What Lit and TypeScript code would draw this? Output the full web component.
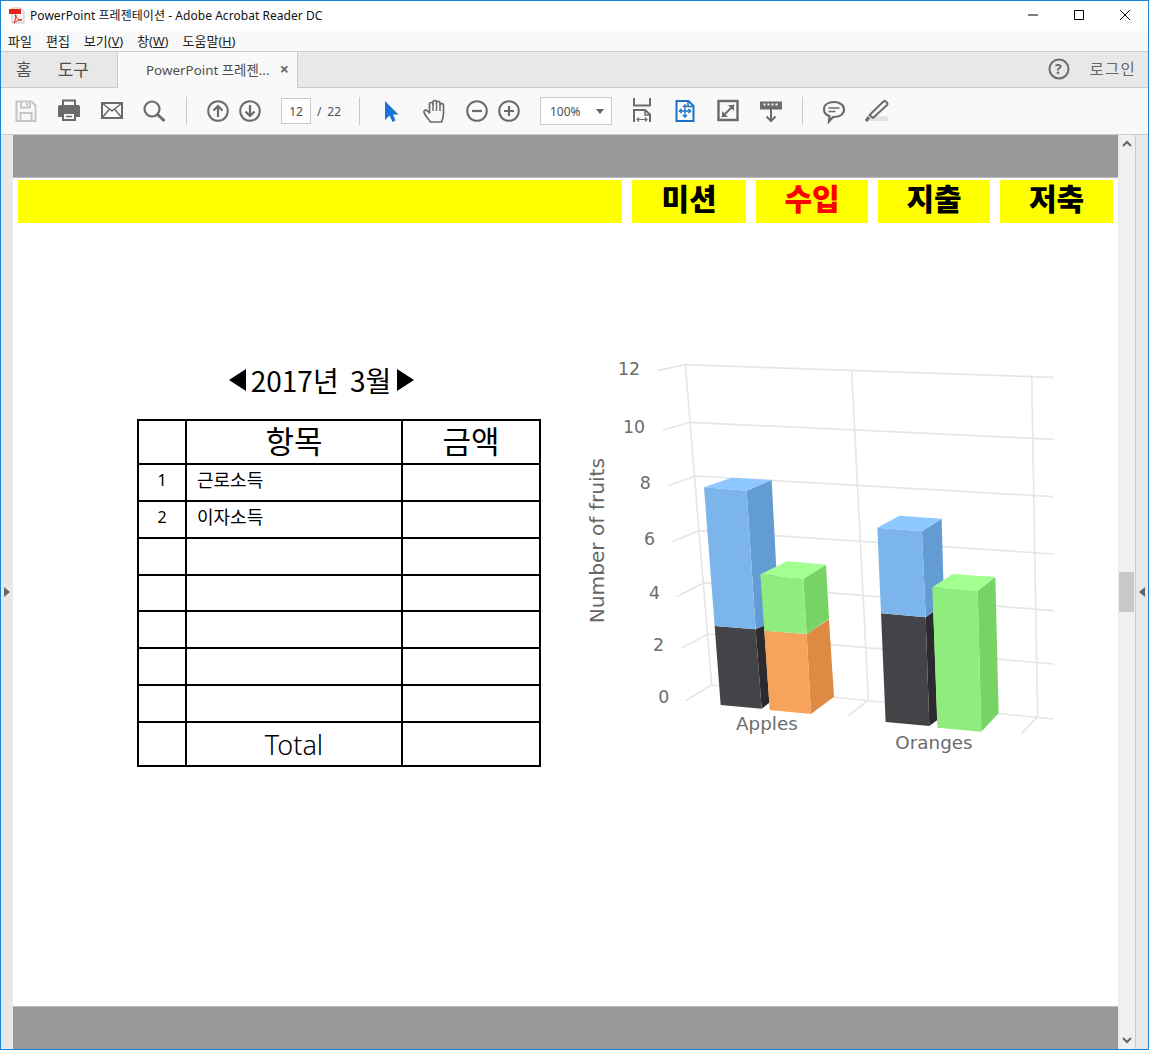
import {css, html, LitElement, svg} from "lit";
import {customElement} from "lit/decorators.js";

const INK = "#6b6b6b";

// one 26x26 toolbar glyph
const icon = (body: unknown) =>
  html`<svg class="ico" viewBox="0 0 26 26" width="26" height="26" fill="none" stroke=${INK} stroke-width="2">${body}</svg>`;

const icons = {
  save: svg`<g stroke="#c6c6c6"><path d="M3.5 3.5h15l4 4v15.500h-19z"/><path d="M8 3.500v6h9v-6M14 5v3M7.500 23v-8h11v8"/></g>`,
  print: svg`<path d="M7 7V2.500h12V7" stroke-width="2"/><path d="M4 7h18a2 2 0 0 1 2 2v10h-4v-4H6v4H2V9a2 2 0 0 1 2-2z" fill=${INK} stroke="none"/><path d="M7 15h12v7H7z" fill="#f9f9f9" stroke-width="2"/><path d="M10 18.500h6" stroke-width="1.500"/>`,
  mail: svg`<path d="M3 5h20v15H3z"/><path d="M3 5l10 8 10-8M3 20l7.500-9M23 20l-7.500-9" stroke-width="1.500"/>`,
  search: svg`<circle cx="10" cy="11" r="7.500" stroke-width="2.200"/><path d="M15.500 16.500l7 6.500" stroke-width="3"/>`,
  up: svg`<circle cx="13" cy="13" r="9.800"/><path d="M13 19V8M8.500 12.500L13 8l4.500 4.500" stroke-width="2.200"/>`,
  down: svg`<circle cx="13" cy="13" r="9.800"/><path d="M13 7v11M8.500 13.500L13 18l4.500-4.500" stroke-width="2.200"/>`,
  cursor: svg`<path d="M7 3v19l4.500-4.500 3 6.500 3-1.500-2.500-6h5.500z" fill="#1a73d2" stroke="none"/>`,
  hand: svg`<g transform="translate(1.500 0)"><path d="M8 24C6 21 2 17 1.500 14c-.3-2 2-2.500 3.500-1l2 2V6c0-2 3.500-2 3.500 0V4c0-2 3.500-2 3.500 0v.5c0-1.700 3.500-1.700 3.500 0V7c0-1.800 3.500-1.800 3.500 0v8c0 4-1 7-2 9z" stroke-width="1.700" stroke-linejoin="round"/><path d="M10.500 6v7M14 4.500V13M17.500 7v6" stroke-width="1.500"/></g>`,
  minus: svg`<circle cx="13" cy="13" r="9.800"/><path d="M8 13h10" stroke-width="2.200"/>`,
  plus: svg`<circle cx="13" cy="13" r="9.800"/><path d="M8 13h10M13 8v10" stroke-width="2.200"/>`,
  fitWidth: svg`<path d="M5 0v7.500h16V0" stroke-width="2"/><path d="M5 24v-12h11l5 4.500V24" stroke-width="2"/><path d="M16 12v5h5" stroke-width="1.500"/><path d="M8 21.500h10M10 19.500l-2 2 2 2M16 19.500l2 2-2 2" stroke-width="1.200"/>`,
  fitPage: svg`<g stroke="#1a73c8"><path d="M4.500 3h12l5 5v15h-17z" stroke-width="2"/><path d="M16 3v5.500h5.500" stroke-width="1.500"/><path d="M13 7v12M7.500 13h11" stroke-width="1.300"/><path d="M11 9l2-2 2 2M11 17l2 2 2-2M9.500 11l-2 2 2 2M16.500 11l2 2-2 2" stroke-width="1.500"/></g>`,
  full: svg`<path d="M3.500 3h19v19h-19z" stroke-width="2.400"/><path d="M7 19l12-12" stroke-width="2"/><path d="M13 7h6v6z" fill=${INK} stroke="none"/><path d="M7 13v6h6z" fill=${INK} stroke="none"/>`,
  read: svg`<path d="M2 3.500h22v8H2z" fill=${INK} stroke="none"/><path d="M5.500 6.500h15" stroke="#f9f9f9" stroke-width="2" stroke-dasharray="2 2"/><path d="M13 11v12M8.500 18.500L13 23l4.500-4.500" stroke-width="2"/>`,
  comment: svg`<path d="M13 4c6 0 10 3 10 7.500S19 19 13 19h-1l-4 4.500.5-5.500C5 17 3 14.500 3 11.500 3 7 7 4 13 4z" stroke-width="2.200"/><path d="M7.500 10h11M7.500 13.500h7" stroke-width="1.300"/>`,
  marker: svg`<path d="M2 23h22v-5H9z" fill="#e3e3e3" stroke="none"/><path d="M2 23l3-4" stroke-width="3"/><path d="M5.500 17l3.500 3L23 7c1.500-1.500-1.500-5-3.500-3.500z" stroke-width="2" stroke-linejoin="round"/>`,
};

interface Face {
  d: string;
  fill: string;
}

// chart is drawn in a 3x canvas so the projected corners stay whole numbers
const GRID = [
  "M232 62L316 44L1420 82",
  "M248 240L330 217L1420 268",
  "M262 408L345 378L1420 440",
  "M276 575L358 542L1420 612",
  "M290 740L372 698L1420 782",
  "M304 895L384 852L1420 942",
  "M316 1052L395 1005L1420 1107",
  "M316 44L395 1005",
  "M815 62L865 1050",
  "M1355 82L1373 1100",
  "M802 1100L865 1050",
  "M1322 1153L1373 1100",
];

const BLUE = {front: "#7cb5ec", top: "#8fc8ff", side: "#639cd3"};
const DARK = {front: "#434348", side: "#2a2a2f"};
const GREEN = {front: "#90ed7d", top: "#a3ff90", side: "#77d464"};
const ORANGE = {front: "#f7a35c", side: "#de8a43"};

const FACES: Face[] = [
  {d: "M527 838L552 825L568 1058L545 1076Z", fill: DARK.side},
  {d: "M404 828L527 838L545 1076L422 1065Z", fill: DARK.front},
  {d: "M500 422L575 390L597 810L527 838Z", fill: BLUE.side},
  {d: "M372 412L455 383L575 390L500 422Z", fill: BLUE.top},
  {d: "M372 412L500 422L527 838L404 828Z", fill: BLUE.front},
  {d: "M680 852L747 808L762 1040L693 1092Z", fill: ORANGE.side},
  {d: "M553 842L680 852L693 1092L569 1080Z", fill: ORANGE.front},
  {d: "M670 686L738 644L747 806L680 852Z", fill: GREEN.side},
  {d: "M541 673L622 634L738 644L670 686Z", fill: GREEN.top},
  {d: "M541 673L670 686L680 852L553 842Z", fill: GREEN.front},
  {d: "M1037 802L1060 785L1072 1110L1048 1128Z", fill: DARK.side},
  {d: "M903 790L1037 802L1048 1128L917 1116Z", fill: DARK.front},
  {d: "M1026 544L1085 506L1092 760L1037 802Z", fill: BLUE.side},
  {d: "M892 533L958 497L1085 506L1026 544Z", fill: BLUE.top},
  {d: "M892 533L1026 544L1037 802L903 790Z", fill: BLUE.front},
  {d: "M1193 722L1246 681L1256 1090L1204 1145Z", fill: GREEN.side},
  {d: "M1057 712L1118 672L1246 681L1193 722Z", fill: GREEN.top},
  {d: "M1057 712L1193 722L1204 1145L1072 1133Z", fill: GREEN.front},
];

const Y_LABELS = [
  {t: "12", x: 180, y: 76},
  {t: "10", x: 195, y: 250},
  {t: "8", x: 212, y: 416},
  {t: "6", x: 225, y: 585},
  {t: "4", x: 240, y: 748},
  {t: "2", x: 252, y: 902},
  {t: "0", x: 268, y: 1058},
];

const ROWS = ["1", "2", "", "", "", "", ""];
const ROW_LABELS = ["근로소득", "이자소득"];

@customElement("app-root")
export class AppRoot extends LitElement {
  static styles = css`
    :host {
      display: block;
      width: 1152px;
      height: 1050px;
      background: #fff;
      font-family: "Noto Sans", "Noto Sans CJK KR", sans-serif;
      overflow: hidden;
    }
    .window {
      width: 1147px;
      height: 1048px;
      border: 1px solid #1883d7;
      display: flex;
      flex-direction: column;
      background: #e8e8e8;
    }
    .titlebar {
      height: 30px;
      flex: none;
      background: #fff;
      display: flex;
      align-items: center;
      padding: 0 0 2px 8px;
      box-sizing: border-box;
      font-size: 12px;
      color: #111;
    }
    .titlebar .name {
      margin-left: 5px;
      flex: 1;
      letter-spacing: 0.05px;
    }
    .winbtn {
      width: 46px;
      display: flex;
      justify-content: center;
    }
    .menubar {
      height: 21px;
      flex: none;
      box-sizing: border-box;
      background: #f9f9f9;
      display: flex;
      align-items: center;
      font-size: 13px;
      color: #222;
      padding: 0 0 2px 7px;
      gap: 14px;
      border-bottom: 1px solid #ccc;
    }
    .menubar u {
      font-size: 12.500px;
    }
    .tabs {
      height: 36px;
      flex: none;
      box-sizing: border-box;
      background: #e8e8e8;
      display: flex;
      align-items: stretch;
      border-bottom: 1px solid #ccc;
      color: #505050;
    }
    .tabs .nav {
      width: 117px;
      flex: none;
      display: flex;
      align-items: center;
      gap: 26px;
      padding: 0 0 2px 15px;
      box-sizing: border-box;
      font-size: 17px;
      border-right: 1px solid #ccc;
    }
    .tab {
      width: 180px;
      flex: none;
      height: 36px;
      box-sizing: border-box;
      background: #f9f9f9;
      border-right: 1px solid #ccc;
      display: flex;
      align-items: center;
      padding: 0 0 2px 28px;
      font-size: 13.400px;
      color: #505050;
      white-space: nowrap;
    }
    .tab .x {
      font-size: 16px;
      font-weight: 700;
      color: #666;
      margin-left: auto;
      margin-right: 8px;
    }
    .tabs .right {
      margin-left: auto;
      display: flex;
      align-items: center;
      font-size: 15.500px;
      letter-spacing: 1.200px;
      color: #666;
      gap: 20px;
      padding: 0 12px 2px 0;
    }
    .toolbar {
      height: 47px;
      flex: none;
      background: #f9f9f9;
      border-bottom: 1px solid #ccc;
      display: flex;
      align-items: center;
      padding-left: 12px;
      box-sizing: border-box;
      color: #505050;
      font-size: 12px;
    }
    .group {
      display: flex;
      align-items: center;
      gap: 17px;
    }
    .group.tight {
      gap: 6px;
    }
    .group.zoomers {
      margin-left: 17px;
    }
    .ico {
      display: block;
      flex: none;
    }
    .sep {
      width: 1px;
      height: 28px;
      background: #c8c8c8;
      margin: 0 18px;
      flex: none;
    }
    .pagebox {
      width: 30px;
      height: 26px;
      box-sizing: border-box;
      border: 1px solid #ccc;
      background: #fff;
      display: flex;
      align-items: center;
      justify-content: center;
      margin-left: 18px;
    }
    .pagetotal {
      margin-left: 6px;
      width: 24px;
      display: flex;
      justify-content: space-between;
    }
    .zoombox {
      width: 72px;
      height: 28px;
      box-sizing: border-box;
      border: 1px solid #ccc;
      background: #fff;
      display: flex;
      align-items: center;
      justify-content: space-between;
      padding: 0 7px 0 9px;
      margin: 0 17px 0 18px;
    }
    .caret {
      width: 0;
      height: 0;
      border: 4px solid transparent;
      border-top: 5px solid #666;
      border-bottom: 0;
    }
    .body {
      flex: 1;
      display: flex;
      min-height: 0;
    }
    .gutter {
      width: 12px;
      flex: none;
      background: #e8e8e8;
      display: flex;
      align-items: center;
      justify-content: center;
    }
    .tri-r {
      width: 0;
      height: 0;
      border: 5px solid transparent;
      border-left: 6px solid #666;
      border-right: 0;
      margin-right: 1px;
    }
    .tri-l {
      width: 0;
      height: 0;
      border: 5px solid transparent;
      border-right: 6px solid #666;
      border-left: 0;
    }
    .doc {
      width: 1105px;
      flex: none;
      background: #fff;
      display: flex;
      flex-direction: column;
      overflow: hidden;
    }
    .band {
      height: 42px;
      flex: none;
      background: #999;
    }
    .band.top {
      border-bottom: 1px solid #bbb;
    }
    .band.bottom {
      margin-top: auto;
      border-top: 1px solid #bbb;
    }
    .nav-row {
      display: flex;
      gap: 10px;
      padding: 2px 0 0 5px;
      height: 43px;
      flex: none;
    }
    .cell {
      background: #ff0;
      height: 43px;
      width: 112px;
      box-sizing: border-box;
      padding-bottom: 10px;
      display: flex;
      align-items: center;
      justify-content: center;
      font-family: "Noto Sans CJK KR", sans-serif;
      font-size: 30px;
      font-weight: 900;
      color: #000;
      line-height: 1;
    }
    .cell.blank {
      width: 604px;
    }
    .cell.wide {
      width: 114px;
    }
    .cell.wide:last-child {
      width: 113px;
    }
    .cell.active {
      color: #f00;
    }
    .main {
      display: flex;
      margin-top: 127px;
      padding-left: 124px;
    }
    .left {
      width: 403px;
      flex: none;
      display: flex;
      flex-direction: column;
    }
    .heading {
      height: 69px;
      box-sizing: border-box;
      padding: 0 34px 10px 0;
      font-family: "Noto Sans CJK KR", sans-serif;
      font-size: 28px;
      word-spacing: 5px;
      line-height: 38px;
      color: #000;
      white-space: nowrap;
      display: flex;
      justify-content: center;
      align-items: center;
    }
    .arrow-l {
      width: 0;
      height: 0;
      border: 11px solid transparent;
      border-right: 17px solid #000;
      border-left: 0;
      margin-right: 5px;
    }
    .arrow-r {
      width: 0;
      height: 0;
      border: 11px solid transparent;
      border-left: 17px solid #000;
      border-right: 0;
      margin-left: 6px;
    }
    table {
      border-collapse: collapse;
      table-layout: fixed;
      width: 402px;
      font-family: "Noto Sans CJK KR", sans-serif;
      color: #000;
    }
    td {
      box-sizing: border-box;
      border: 2px solid #000;
      padding: 0;
      height: 37px;
      font-size: 15px;
      line-height: 1;
      text-align: center;
    }
    .col-no {
      width: 48px;
    }
    .col-item {
      width: 216px;
    }
    .col-amt {
      width: 138px;
    }
    tr.big td {
      height: 44px;
      font-size: 31px;
      padding-bottom: 6px;
    }
    tr.thin td {
      height: 36px;
    }
    tr.big td.latin {
      font-family: "Noto Sans", sans-serif;
      font-size: 27px;
      font-weight: 300;
      padding-bottom: 0;
    }
    td.label {
      text-align: left;
      padding: 0 0 8px 10px;
      font-size: 18px;
    }
    td.no {
      font-family: "Noto Sans", sans-serif;
      font-size: 16px;
      padding-bottom: 5px;
    }
    .chart {
      display: block;
      flex: none;
      margin-left: 40px;
    }
    .chart text {
      font-family: "DejaVu Sans", sans-serif;
      fill: #6c6c6c;
      font-size: 52px;
    }
    .chart text.cat {
      font-size: 55px;
    }
    .chart text.title {
      font-size: 56px;
      fill: #666;
    }
    .scroll {
      width: 16px;
      flex: none;
      background: #f0f0f0;
      border-right: 1px solid #ccc;
      margin-left: 1px;
      display: flex;
      flex-direction: column;
      align-items: stretch;
      justify-content: space-between;
      position: relative;
    }
    .scroll svg {
      display: block;
      margin: 4px auto;
    }
    .thumb {
      position: absolute;
      top: 437px;
      left: 0;
      width: 15px;
      height: 40px;
      background: #c8c8c8;
    }
    .gutter.right {
      width: 11px;
    }
  `;

  private renderChart() {
    return html`<svg class="chart" width="490" height="420" viewBox="0 0 1470 1260">
      ${GRID.map(
        (d) => svg`<path d=${d} fill="none" stroke="#e6e6e6" stroke-width="5"/>`
      )}
      ${FACES.map((f) => svg`<path d=${f.d} fill=${f.fill}/>`)}
      ${Y_LABELS.map(
        (l) => svg`<text x=${l.x} y=${l.y} text-anchor="end">${l.t}</text>`
      )}
      <text class="cat" x="468" y="1141">Apples</text>
      <text class="cat" x="946" y="1196">Oranges</text>
      <text
        class="title"
        transform="translate(72 820) rotate(-90)"
        textLength="496"
        lengthAdjust="spacingAndGlyphs"
      >Number of fruits</text>
    </svg>`;
  }

  render() {
    return html`
      <div class="window">
        <div class="titlebar">
          <svg width="16" height="17" viewBox="0 0 16 17">
            <path d="M3 1h9l3 3v12H3z" fill="#f4f4f4" stroke="#c4c4c4"/>
            <path d="M0 2h12v5H0z" fill="#e2231a"/>
            <path d="M6 8c1 3 3 5 7 5-3 0-6 1-8 3 1-3 2-5 2-8z" fill="none" stroke="#e2231a" stroke-width="1"/>
          </svg>
          <span class="name">PowerPoint 프레젠테이션 - Adobe Acrobat Reader DC</span>
          <span class="winbtn"><svg width="12" height="12" viewBox="0 0 12 12"><path d="M1 6h10" stroke="#000"/></svg></span>
          <span class="winbtn"><svg width="12" height="12" viewBox="0 0 12 12"><path d="M1.500 1.500h9v9h-9z" fill="none" stroke="#000"/></svg></span>
          <span class="winbtn"><svg width="12" height="12" viewBox="0 0 12 12"><path d="M1 1l10 10M11 1L1 11" stroke="#000" fill="none"/></svg></span>
        </div>
        <div class="menubar">
          <span>파일</span><span>편집</span>
          <span>보기(<u>V</u>)</span><span>창(<u>W</u>)</span><span>도움말(<u>H</u>)</span>
        </div>
        <div class="tabs">
          <div class="nav"><span>홈</span><span>도구</span></div>
          <div class="tab"><span>PowerPoint 프레젠...</span><span class="x">×</span></div>
          <div class="right">
            <svg width="22" height="22" viewBox="0 0 22 22" fill="none">
              <circle cx="11" cy="11" r="9.500" stroke=${INK} stroke-width="2"/>
              <text x="11" y="16" text-anchor="middle" font-size="14" font-weight="700" fill=${INK} font-family="Noto Sans">?</text>
            </svg>
            <span>로그인</span>
          </div>
        </div>
        <div class="toolbar">
          <div class="group">
            ${icon(icons.save)}${icon(icons.print)}${icon(icons.mail)}${icon(icons.search)}
          </div>
          <div class="sep"></div>
          <div class="group tight">${icon(icons.up)}${icon(icons.down)}</div>
          <div class="pagebox">12</div>
          <div class="pagetotal"><span>/</span><span>22</span></div>
          <div class="sep"></div>
          <div class="group">${icon(icons.cursor)}${icon(icons.hand)}</div>
          <div class="group tight zoomers">${icon(icons.minus)}${icon(icons.plus)}</div>
          <div class="zoombox"><span>100%</span><span class="caret"></span></div>
          <div class="group">
            ${icon(icons.fitWidth)}${icon(icons.fitPage)}${icon(icons.full)}${icon(icons.read)}
          </div>
          <div class="sep"></div>
          <div class="group">${icon(icons.comment)}${icon(icons.marker)}</div>
        </div>
        <div class="body">
          <div class="gutter"><span class="tri-r"></span></div>
          <div class="doc">
            <div class="band top"></div>
            <div class="nav-row">
              <div class="cell blank"></div>
              <div class="cell wide">미션</div>
              <div class="cell active">수입</div>
              <div class="cell">지출</div>
              <div class="cell wide">저축</div>
            </div>
            <div class="main">
              <div class="left">
                <div class="heading">
                  <span class="arrow-l"></span><span>2017년 3월</span><span class="arrow-r"></span>
                </div>
                <table>
                  <colgroup><col class="col-no"/><col class="col-item"/><col class="col-amt"/></colgroup>
                  <tr class="big"><td></td><td>항목</td><td>금액</td></tr>
                  ${ROWS.map(
                    (n, i) => html`<tr class=${i === 3 ? "thin" : ""}>
                      <td class="no">${n}</td>
                      <td class="label">${ROW_LABELS[i] ?? ""}</td>
                      <td></td>
                    </tr>`
                  )}
                  <tr class="big"><td></td><td class="latin">Total</td><td></td></tr>
                </table>
              </div>
              ${this.renderChart()}
            </div>
            <div class="band bottom"></div>
          </div>
          <div class="scroll">
            <svg width="10" height="10" viewBox="0 0 10 10"><path d="M1 7l4-4 4 4" fill="none" stroke="#666" stroke-width="2"/></svg>
            <div class="thumb"></div>
            <svg width="10" height="10" viewBox="0 0 10 10"><path d="M1 3l4 4 4-4" fill="none" stroke="#666" stroke-width="2"/></svg>
          </div>
          <div class="gutter right"><span class="tri-l"></span></div>
        </div>
      </div>
    `;
  }
}
